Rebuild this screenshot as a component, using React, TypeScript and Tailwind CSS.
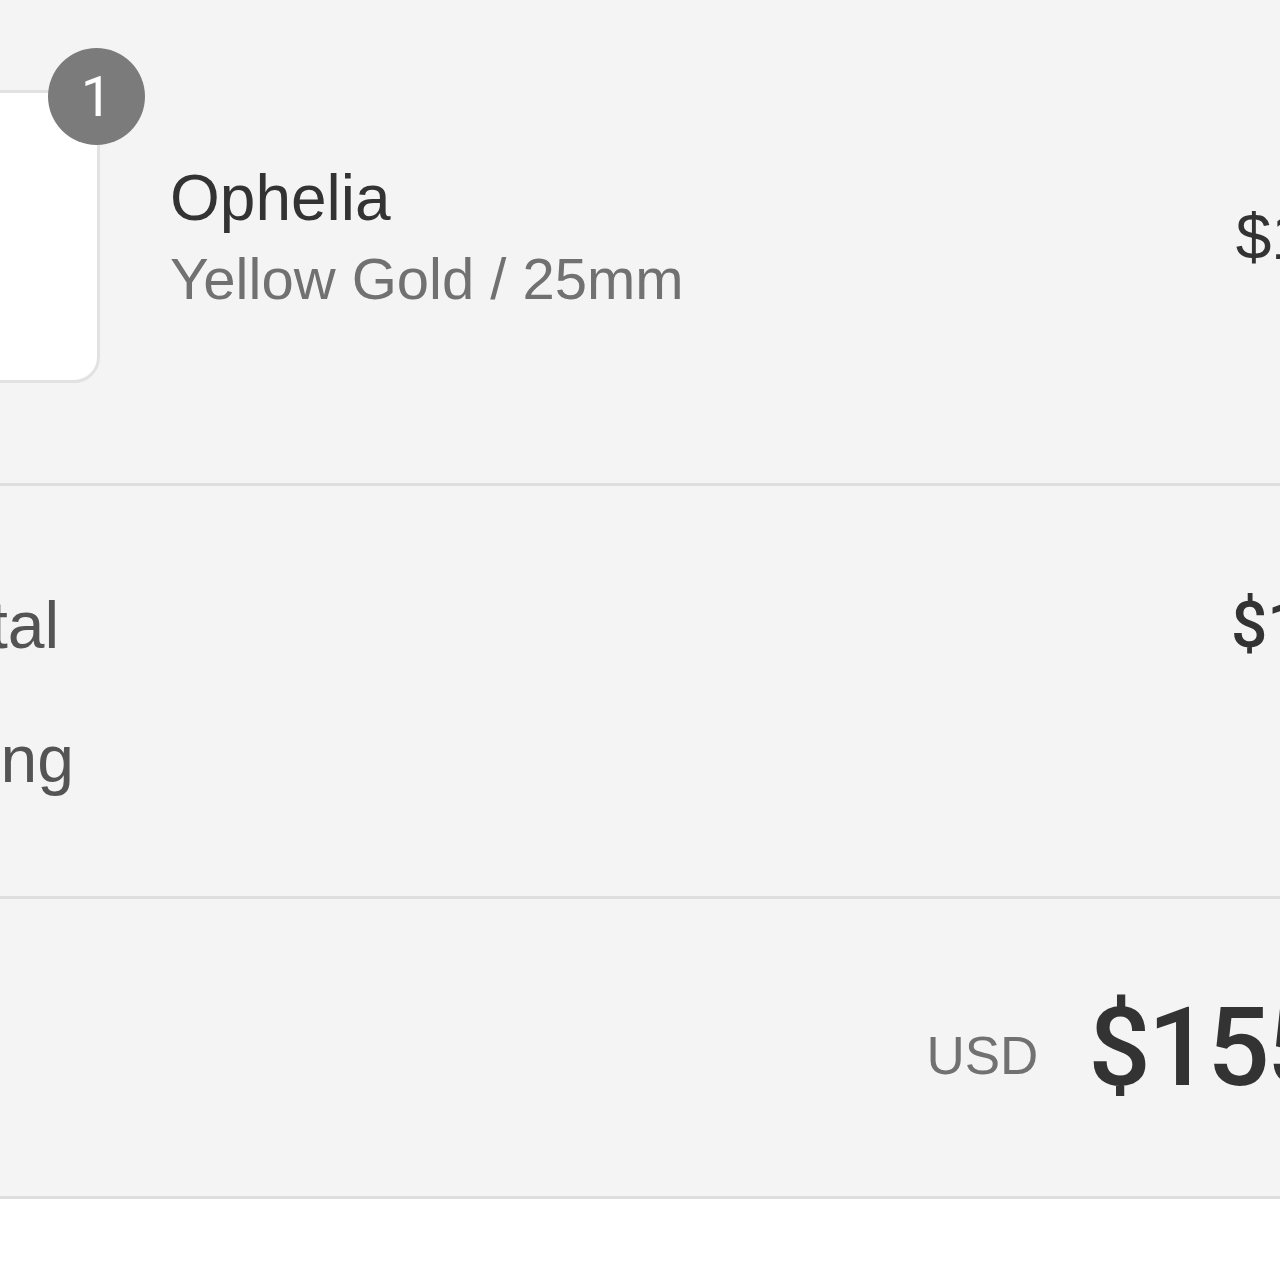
import React from 'react';

type Line = { label: string; value: string; strong?: boolean };

const lines: Line[] = [
  { label: 'Subtotal', value: '$155.00', strong: true },
  { label: 'Shipping', value: 'Free' },
];

const ProductThumb: React.FC<{ qty: number }> = ({ qty }) => (
  <div className="relative w-[293px] h-[293px] shrink-0 rounded-[26px] border-[3px] border-[#e2e2e2] bg-white">
    <span className="absolute top-[-45px] right-[-48px] flex h-[97px] w-[97px] items-center justify-center rounded-full bg-[#7b7b7b] font-['Roboto',Arial,sans-serif] text-[56px] leading-none text-white">
      {qty}
    </span>
  </div>
);

export default function App() {
  return (
    <div className="h-[1280px] w-[1280px] overflow-hidden bg-white font-['Liberation_Sans',Arial,sans-serif] text-[#333333]">
      <div className="bg-[#f4f4f4]">
        <div className="ml-[-193px] w-[1660px]">
          {/* line item */}
          <section className="flex items-center justify-between border-b-[3px] border-[#dedede] pt-[90px] pb-[100px]">
            <div className="flex items-center">
              <ProductThumb qty={1} />
              <div className="ml-[70px] flex flex-col">
                <span className="text-[64px] leading-[72px] text-[#333333]">Ophelia</span>
                <span className="mt-[13px] text-[58px] leading-[64px] text-[#717171]">Yellow Gold / 25mm</span>
              </div>
            </div>
            <span className="text-[64px] leading-[72px] text-[#333333]">$155.00</span>
          </section>

          {/* subtotal / shipping */}
          <section className="flex flex-col gap-[57px] border-b-[3px] border-[#dedede] pt-[101px] pb-[98px]">
            {lines.map((l) => (
              <div key={l.label} className="flex items-center justify-between text-[64px] leading-[77px]">
                <span className="pl-[10px] text-[66px] text-[#545454]">{l.label}</span>
                <span
                  className={
                    l.strong
                      ? "font-['Roboto',Arial,sans-serif] font-medium text-[#333333]"
                      : 'text-[#333333]'
                  }
                >
                  {l.value}
                </span>
              </div>
            ))}
          </section>

          {/* total */}
          <section className="flex h-[300px] items-center justify-between border-b-[3px] border-[#dedede]">
            <span className="text-[64px] text-[#333333]">Total</span>
            <div className="mr-[-6px] flex items-center gap-[50px]">
              <span className="mt-[16px] text-[53px] leading-none text-[#717171]">USD</span>
              <span className="font-['Roboto',Arial,sans-serif] text-[110px] font-medium leading-none tracking-[-3px] text-[#333333]">
                $155.00
              </span>
            </div>
          </section>
        </div>
      </div>
    </div>
  );
}
